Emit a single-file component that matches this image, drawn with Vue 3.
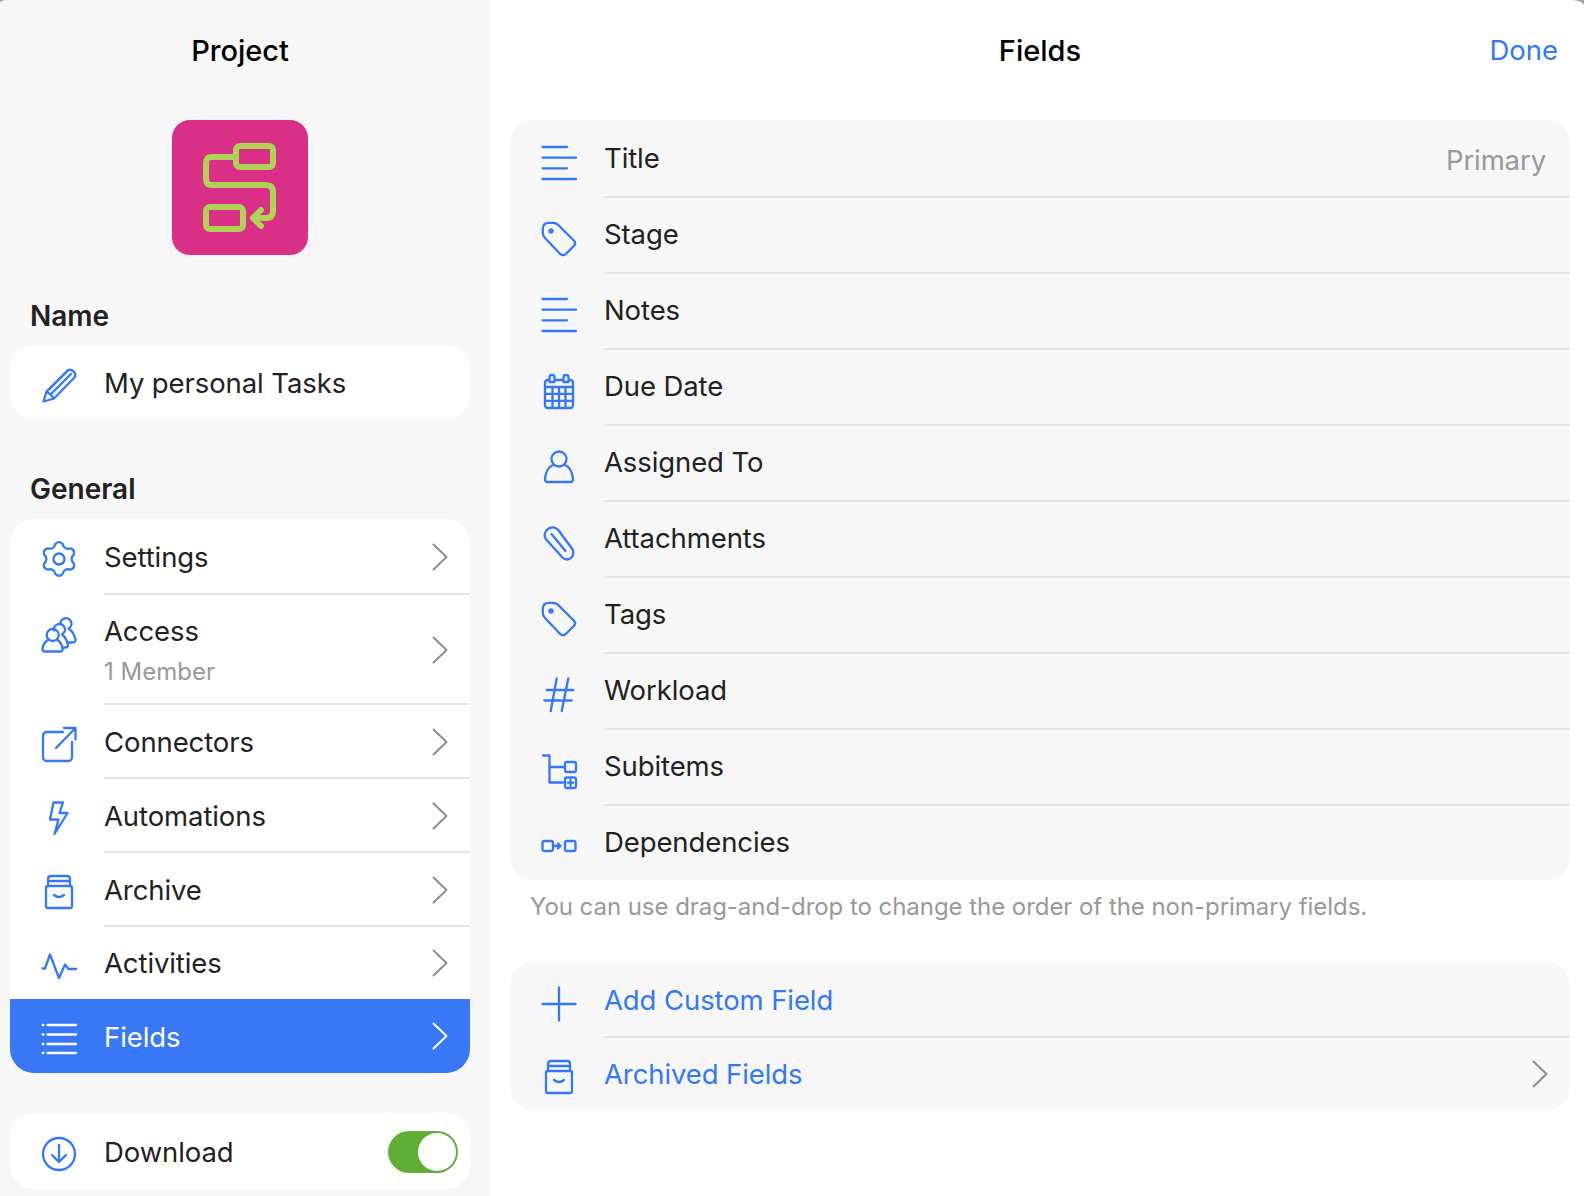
<script setup>
function gearPath() {
  const c = 17
  const pt = (r, deg) => {
    const a = (deg * Math.PI) / 180
    return (c + r * Math.cos(a)).toFixed(2) + ' ' + (c + r * Math.sin(a)).toFixed(2)
  }
  let d = 'M' + pt(15.6, -90 - 13)
  for (let i = 0; i < 6; i++) {
    const a = -90 + 60 * i
    d += ' Q' + pt(18.6, a) + ' ' + pt(15.6, a + 13)
    d += ' Q' + pt(10.2, a + 30) + ' ' + pt(15.6, a + 47)
  }
  return d + ' Z M22.5 17 A5.5 5.5 0 1 1 11.5 17 A5.5 5.5 0 1 1 22.5 17 Z'
}
const fields = [
  { name: 'Title', icon: 'text', right: 'Primary' },
  { name: 'Stage', icon: 'tag' },
  { name: 'Notes', icon: 'text' },
  { name: 'Due Date', icon: 'cal' },
  { name: 'Assigned To', icon: 'person' },
  { name: 'Attachments', icon: 'clip' },
  { name: 'Tags', icon: 'tag' },
  { name: 'Workload', icon: 'hash' },
  { name: 'Subitems', icon: 'sub' },
  { name: 'Dependencies', icon: 'dep' },
]
const general = [
  { name: 'Settings', icon: 'gear', h: 76 },
  { name: 'Access', icon: 'people', sub: '1 Member', h: 110 },
  { name: 'Connectors', icon: 'share', h: 74 },
  { name: 'Automations', icon: 'bolt', h: 74 },
  { name: 'Archive', icon: 'archive', h: 74 },
  { name: 'Activities', icon: 'pulse', h: 72 },
  { name: 'Fields', icon: 'list', h: 74, active: true },
]
const paths = {
  pencil: 'M1.5 33.5 L4.5 23.5 L25 3 Q28 0.5 31 3 L32 4 Q34.5 7 32.5 9.5 L12 30.5 Z M4.5 23.5 L8.5 26.5 L12 30.5 M8.5 26.5 L29 6 M7 21.5 L26.5 2',
  text: 'M0.5 1 H25 M0.5 11.7 H34 M0.5 22.3 H25 M0.5 33 H34',
  tag: 'M0.8 7 Q0.8 0.8 7 0.8 H11 Q14 0.8 16 2.8 L31.8 18.5 Q34.5 21.5 31.8 24 L24 31.8 Q21 34.5 18 31.8 L3 16 Q0.8 14 0.8 11 Z M7.5 9 a1.5 1.5 0 1 0 3 0 a1.5 1.5 0 1 0 -3 0 Z',
  cal: 'M7 6 H6 Q3 6 3 9 V31 Q3 34 6 34 H28 Q31 34 31 31 V9 Q31 6 28 6 H27 M13 6 H21 M3 13 H31 M3 19.8 H31 M3 26.8 H31 M10.5 13 V34 M17 13 V34 M23.5 13 V34 M7.5 8 V3 Q7.5 1 10 1 Q12.5 1 12.5 3 V8 Z M21.5 8 V3 Q21.5 1 24 1 Q26.5 1 26.5 3 V8 Z',
  person: 'M24.5 9 A7.5 7.5 0 1 1 9.5 9 A7.5 7.5 0 1 1 24.5 9 Z M11 15 Q4 18 3 29 Q3 32 5.5 32 H28.5 Q31 32 31 29 Q30 18 23 15',
  clip: 'M3.8 13 Q1.5 9 4 5 Q8 0 13.5 2 Q15.5 3 17 5 L30 22.5 Q33 27 29.5 31.5 Q25 35.5 20.5 31.5 Z M9.5 8 L23.5 25',
  hash: 'M14.7 0.5 L8.7 33 M26.3 0.5 L19.7 33 M4.7 12 H31.3 M2.3 22.5 H29.7',
  sub: 'M1 1.5 H7.5 V28.5 H22 M7.5 13 H22 M25 8 H32 Q34 8 34 10 V16 Q34 18 32 18 H25 Q23 18 23 16 V10 Q23 8 25 8 Z M25 23.5 H32 Q34 23.5 34 25.5 V32 Q34 34 32 34 H25 Q23 34 23 32 V25.5 Q23 23.5 25 23.5 Z M28.5 26 V31.5 M25.8 28.7 H31.2',
  dep: 'M2.5 12 H9 Q11 12 11 14 V20 Q11 22 9 22 H2.5 Q0.5 22 0.5 20 V14 Q0.5 12 2.5 12 Z M25 12 H31.5 Q33.5 12 33.5 14 V20 Q33.5 22 31.5 22 H25 Q23 22 23 20 V14 Q23 12 25 12 Z M11 17 H18.5 M16 14.5 L18.5 17 L16 19.5',
  gear: gearPath(),
  people: 'M16.7 17 A6 6 0 1 1 4.7 17 A6 6 0 1 1 16.7 17 Z M12 12.5 A5.5 5.5 0 1 1 20.5 16 M18.5 6.5 A5.5 5.5 0 1 1 26.5 10.5 M6 22 Q1 25 0.5 31 Q0.5 33.5 3 33.5 H18 Q21 33.5 20.5 31 Q20 25 15.5 22 M20 16.5 Q24.5 20 26 27 Q26 29.5 23.5 29.5 H20.5 M26.5 10.5 Q31.5 14 33.5 21 Q34 24.5 30.5 24.5 H26',
  share: 'M21 5 H5 Q1 5 1 9 V30 Q1 34 5 34 H26 Q30 34 30 30 V15 M14 21 L33.5 1 M22 1 H33.5 V12.5',
  bolt: 'M11.5 1.5 H21 L17.5 12 H25.5 L12.5 33 L16.5 18.5 H8 Z',
  archive: 'M6 11 V4 Q6 1 9 1 H25 Q28 1 28 4 V11 M6 6 H28 M6 11 H28 Q30 11 30 13 V31 Q30 33 28 33 H6 Q4 33 4 31 V13 Q4 11 6 11 Z M12 20 Q17 24 22 20',
  pulse: 'M0.5 20.5 H3 L8 6.5 L17 30 L23 16.5 L26.5 21 H34',
  list: 'M5.5 4 H34 M5.5 13.5 H34 M5.5 23 H34 M5.5 32 H34 M0.8 4 H1.5 M0.8 13.5 H1.5 M0.8 23 H1.5 M0.8 32 H1.5',
  plus: 'M17 0.5 V33.5 M0.5 17 H33.5',
  down: 'M33 17 A16 16 0 1 1 1 17 A16 16 0 1 1 33 17 Z M17 8 V25 M10 18 L17 25 L24 18',
}
</script>

<template>
  <div class="screen">
    <aside class="side">
      <h1 class="head">Project</h1>
      <div class="logo">
        <svg width="74" height="90" viewBox="0 0 74 90" fill="none" stroke="#afd455" stroke-width="6" stroke-linecap="round" stroke-linejoin="round">
          <rect x="33" y="3" width="37" height="21" rx="4" />
          <rect x="3" y="64" width="37" height="22" rx="4" />
          <path d="M33 14 H9 Q3 14 3 20 V36 Q3 42 9 42 H63 Q70 42 70 49 V68 Q70 75 63 75 H52 M58 67 L50 75 L58 83" />
        </svg>
      </div>
      <h2 class="section">Name</h2>
      <div class="card">
        <div class="row single">
          <span class="ico"><svg width="34" height="34" viewBox="0 0 34 34"><path :d="paths.pencil" /></svg></span>
          <span class="lbl">My personal Tasks</span>
        </div>
      </div>
      <h2 class="section general">General</h2>
      <div class="card">
        <div v-for="g in general" :key="g.name" class="row" :class="{ active: g.active, tall: g.sub }" :style="{ height: g.h + 'px' }">
          <span class="ico"><svg width="34" height="34" viewBox="0 0 34 34"><path :d="paths[g.icon]" /></svg></span>
          <div class="mid">
            <div class="lbls">
              <span class="lbl">{{ g.name }}</span>
              <span v-if="g.sub" class="sub">{{ g.sub }}</span>
            </div>
            <svg class="chev" width="16" height="28" viewBox="0 0 16 28"><path d="M1.5 1.5 L14.5 14 L1.5 26.5" /></svg>
          </div>
        </div>
      </div>
      <div class="card dl">
        <div class="row single">
          <span class="ico"><svg width="34" height="34" viewBox="0 0 34 34"><path :d="paths.down" /></svg></span>
          <span class="lbl">Download</span>
          <span class="toggle"><span class="knob"></span></span>
        </div>
      </div>
    </aside>
    <main class="main">
      <header class="top">
        <h1 class="head">Fields</h1>
        <span class="done">Done</span>
      </header>
      <section class="fcard">
        <div v-for="f in fields" :key="f.name" class="frow">
          <span class="fico"><svg width="34" height="34" viewBox="0 0 34 34"><path :d="paths[f.icon]" /></svg></span>
          <div class="fmid">
            <span class="lbl">{{ f.name }}</span>
            <span v-if="f.right" class="right">{{ f.right }}</span>
          </div>
        </div>
      </section>
      <p class="note">You can use drag-and-drop to change the order of the non-primary fields.</p>
      <section class="fcard second">
        <div class="frow small">
          <span class="fico"><svg width="34" height="34" viewBox="0 0 34 34"><path :d="paths.plus" /></svg></span>
          <div class="fmid"><span class="lbl link">Add Custom Field</span></div>
        </div>
        <div class="frow small">
          <span class="fico"><svg width="34" height="34" viewBox="0 0 34 34"><path :d="paths.archive" /></svg></span>
          <div class="fmid">
            <span class="lbl link">Archived Fields</span>
            <svg class="chev end" width="16" height="28" viewBox="0 0 16 28"><path d="M1.5 1.5 L14.5 14 L1.5 26.5" /></svg>
          </div>
        </div>
      </section>
    </main>
  </div>
</template>

<style>
html, body { margin: 0; background: #a6a6a6; }
</style>

<style scoped>
.screen {
  width: 1584px;
  height: 1196px;
  display: flex;
  overflow: hidden;
  font-family: Inter, "Liberation Sans", sans-serif;
  color: #222;
  background: #fff;
  border-top-left-radius: 8px 3px;
  border-top-right-radius: 13px 6px;
}
.side {
  width: 490px;
  flex: none;
  box-sizing: border-box;
  background: #f7f7f7;
  padding: 0 20px 0 10px;
  display: flex;
  flex-direction: column;
}
.head {
  margin: 0;
  height: 102px;
  line-height: 102px;
  font-size: 29px;
  font-weight: 500;
  color: #000;
  text-align: center;
}
.logo {
  width: 136px;
  height: 135px;
  margin: 18px auto 0;
  border-radius: 18px;
  background: #da2f87;
  display: flex;
  align-items: center;
  justify-content: center;
  flex: none;
}
.section {
  margin: 44px 0 0 20px;
  height: 46px;
  line-height: 34px;
  font-size: 28px;
  font-weight: 600;
  color: #222;
  flex: none;
}
.section.general { margin-top: 54px; line-height: 32px; }
.card {
  background: #fff;
  border-radius: 24px;
  overflow: hidden;
  flex: none;
}
.row {
  display: flex;
  align-items: center;
  height: 74px;
}
.row.single { box-sizing: border-box; padding-top: 2px; }
.dl .row { height: 76px; }
.ico {
  width: 94px;
  flex: none;
  display: flex;
  justify-content: center;
  box-sizing: border-box;
  padding: 4px 0 0 3px;
}
.tall .ico { align-self: flex-start; padding-top: 23px; }
.ico svg, .fico svg {
  fill: none;
  stroke: #3478f6;
  stroke-width: 2.3;
  stroke-linecap: round;
  stroke-linejoin: round;
  overflow: visible;
}
.mid {
  flex: 1;
  align-self: stretch;
  min-width: 0;
  display: flex;
  align-items: center;
  justify-content: space-between;
  padding-right: 22px;
  box-shadow: inset 0 -2px 0 #e5e5e5;
}
.row:last-child .mid, .row:nth-last-child(2) .mid { box-shadow: none; }
.active .lbls { padding-top: 2px; }
.lbls { display: flex; flex-direction: column; }
.lbl { font-size: 27.5px; letter-spacing: -0.1px; line-height: 36px; color: #222; }
.sub { font-size: 24px; line-height: 32px; margin-top: 7px; color: #999; }
.chev { fill: none; stroke: #8e8e8e; stroke-width: 2; stroke-linecap: round; stroke-linejoin: round; flex: none; }
.active { background: #3878f6; }
.active .lbl { color: #fff; }
.active .ico svg { stroke: #fff; }
.active .chev { stroke: #fff; }
.dl { margin-top: 40px; }
.toggle {
  margin-left: auto;
  margin-right: 12px;
  width: 70px;
  height: 42px;
  border-radius: 21px;
  background: #5fae35;
  position: relative;
}
.knob {
  position: absolute;
  top: 2px;
  right: 2px;
  width: 38px;
  height: 38px;
  border-radius: 50%;
  background: #fff;
}
.main {
  flex: 1;
  min-width: 0;
  box-sizing: border-box;
  padding: 0 14px 0 20px;
  display: flex;
  flex-direction: column;
}
.top { position: relative; margin-bottom: 18px; flex: none; }
.done {
  position: absolute;
  right: 12px;
  top: 0;
  line-height: 100px;
  font-size: 27.5px;
  color: #3478f6;
}
.fcard {
  background: #f7f7f7;
  border-radius: 24px;
  overflow: hidden;
  padding-top: 2px;
  flex: none;
}
.frow {
  display: flex;
  height: 76px;
}
.frow:last-child { height: 74px; }
.frow.small { height: 74px; }
.frow.small:last-child { height: 72px; }
.fico {
  width: 94px;
  flex: none;
  display: flex;
  align-items: center;
  justify-content: center;
  box-sizing: border-box;
  padding: 6px 0 0 4px;
}
.fmid {
  flex: 1;
  min-width: 0;
  box-sizing: border-box;
  display: flex;
  align-items: center;
  justify-content: space-between;
  box-shadow: inset 0 -2px 0 #e5e5e5;
  padding: 0 24px 4px 0;
}
.frow.small .fmid { padding-bottom: 2px; }
.frow:last-child .fmid { box-shadow: none; padding-bottom: 2px; }
.frow.small:last-child .fmid { padding-bottom: 0; }
.right { font-size: 27.5px; letter-spacing: -0.1px; color: #999; margin-top: 4px; }
.note {
  margin: 9px 0 0 20px;
  height: 36px;
  line-height: 36px;
  font-size: 24px;
  letter-spacing: -0.05px;
  color: #999;
  flex: none;
}
.second { margin-top: 37px; }
.link { color: #3478f6; }
.chev.end { margin-right: -2px; }
</style>
